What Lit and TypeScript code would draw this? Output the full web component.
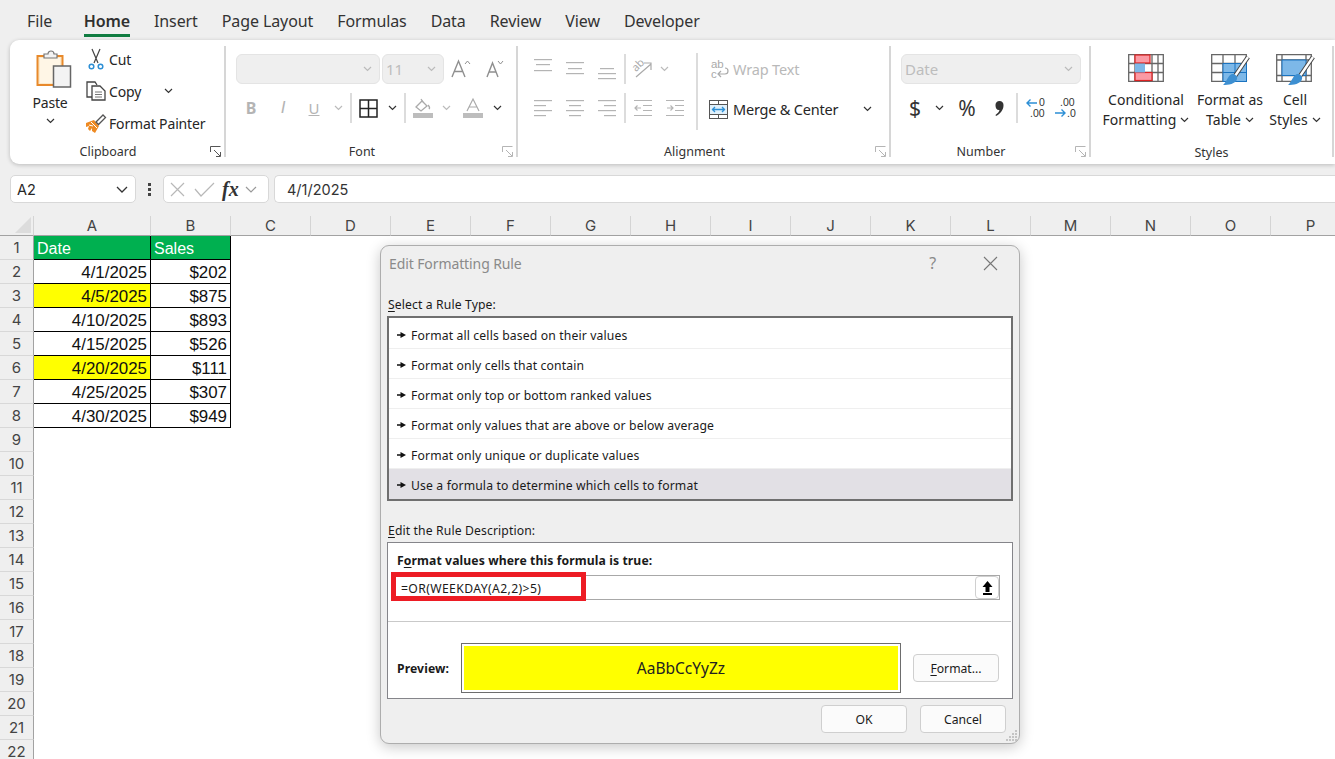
import { LitElement, html, css, svg } from "lit";
import { customElement } from "lit/decorators.js";

const chev = (c = "#333") => html`<svg class="chev" width="9" height="6" viewBox="0 0 9 6"><path d="M1 1l3.5 3.5L8 1" fill="none" stroke=${c} stroke-width="1.2"/></svg>`;
const launcher = (c: string) => html`<svg class="launch" width="11" height="11" viewBox="0 0 11 11"><path d="M.5 6V.5H10.5M4 4l6 6M6 10.5h4.5V6" fill="none" stroke=${c} stroke-width="1"/></svg>`;
const alignLines = (rows: number[][], c = "#b4b4b4") => html`<svg width="18" height="30" viewBox="0 0 18 30">${rows.map((r) => svg`<rect x=${r[0]} y=${r[2]} width=${r[1]} height="1.2" fill=${c}></rect>`)}</svg>`;
const brush = svg`<path d="M37 3 L24 22" stroke="#444" stroke-width="4.4"/><path d="M37 3 L24 22" stroke="#fff" stroke-width="2.4"/><path d="M21 20c3 0 6 2 5 5-1 5-9 6-14 6 3-2 5-10 9-11z" fill="#3d8fd1"/>`;

@customElement("app-root")
export class AppRoot extends LitElement {
  static styles = css`
    :host { display: block; width: 1335px; height: 759px; overflow: hidden; position: relative; background: #efefef; font-family: "Noto Sans", sans-serif; color: #262626; font-size: 14px; }
    svg { display: block; flex: none; overflow: visible; }
    .tabs { display: flex; height: 40px; padding-left: 27px; gap: 24px; font-size: 16px; letter-spacing: -0.1px; }
    .tab { height: 37px; line-height: 42px; color: #333; }
    .tab.file { margin-right: 7.5px; }
    .tab.on { font-weight: 600; border-bottom: 3px solid #107c41; height: 34px; line-height: 42px; color: #303030; letter-spacing: -0.1px; }
    .ribbon { display: flex; height: 124px; margin-left: 10px; background: #fff; border-radius: 9px 0 0 9px; box-shadow: 0 1px 4px rgba(0,0,0,.22); align-items: flex-start; }
    .group { position: relative; box-sizing: border-box; height: 111px; margin-top: 6px; border-right: 2px solid #d6d6d6; display: flex; flex-direction: column; flex: none; }
    .g-clip { width: 216px; padding: 4px 0 0 17px; }
    .g-font { width: 292px; padding: 8px 0 0 10px; }
    .g-align { width: 373px; padding: 8px 0 0 9px; }
    .g-num { width: 200px; padding: 8px 0 0 10px; }
    .g-styles { width: 243px; padding: 8px 0 0 10px; }
    .glabel { position: absolute; left: 0; right: 18px; bottom: -4px; height: 18px; line-height: 18px; text-align: center; font-size: 12.5px; color: #333; }
    .g-styles .glabel { right: 0; bottom: -5px; }
    .launch { position: absolute; right: 3px; bottom: 0; }
    .clip-body { display: flex; }
    .paste { width: 46px; display: flex; flex-direction: column; align-items: center; }
    .paste svg:first-child { margin-left: 7px; }
    .paste .pt { margin-top: 6px; line-height: 18px; font-size: 14px; letter-spacing: -.2px; }
    .paste .chev { margin-top: 6px; }
    .clip-cmds { margin: -7px 0 0 10px; display: flex; flex-direction: column; }
    .cmd { height: 32px; display: flex; align-items: center; font-size: 14px; letter-spacing: -.15px; }
    .cmd .ic { width: 26px; display: flex; justify-content: center; }
    .cmd .chev { margin-left: 23px; }
    .row { display: flex; align-items: center; height: 30px; }
    .row2 { margin-top: 9px; }
    .sel { box-sizing: border-box; height: 30px; background: #efefef; border: 1px solid #e4e4e4; border-radius: 6px; display: flex; align-items: center; justify-content: space-between; padding: 0 7px 0 3px; color: #bdbdbd; font-size: 15px; flex: none; }
    .w144 { width: 144px; margin-right: 2px; }
    .w62 { width: 62px; }
    .w180 { width: 180px; }
    .s { display: flex; align-items: center; justify-content: center; flex: none; height: 30px; }
    .w4 { width: 4px; } .w6 { width: 6px; } .w8 { width: 8px; } .w10 { width: 10px; } .w16 { width: 16px; } .w20 { width: 20px; }
    .w28 { width: 28px; } .w30 { width: 30px; } .w32 { width: 32px; } .w34 { width: 34px; } .w36 { width: 36px; } .w38 { width: 38px; }
    .vs { width: 2px; height: 30px; background: #dcdcdc; }
    .b { font-weight: 700; font-size: 16px; color: #b4b4b4; }
    .i { font-style: italic; font-size: 17px; color: #b4b4b4; font-family: "Liberation Sans", sans-serif; }
    .u { font-size: 15px; color: #b4b4b4; text-decoration: underline; }
    .align-body { display: flex; }
    .align-left { width: 169px; flex: none; }
    .align-right { border-left: 2px solid #dcdcdc; height: 77px; margin-top: -1px; padding-left: 13px; box-sizing: border-box; flex: 1; }
    .wrap { display: flex; align-items: center; height: 30px; margin-top: 1px; color: #b9b9b9; font-size: 14.5px; letter-spacing: -.15px; gap: 4px; }
    .merge { display: flex; align-items: center; height: 30px; margin-top: 10px; margin-left: -2px; font-size: 14.5px; letter-spacing: -.2px; gap: 5px; }
    .merge .chev { margin-left: 20px; }
    .num-sym { font-size: 21px; color: #333; line-height: 1; }
    .styles-body { display: flex; }
    .sc { display: flex; flex-direction: column; align-items: center; flex: none; font-size: 14px; letter-spacing: .05px; line-height: 20px; }
    .sc .top { height: 36px; }
    .sc .l { display: flex; align-items: center; gap: 4px; white-space: nowrap; }
    .w90 { width: 90px; } .w78 { width: 78px; } .w52 { width: 52px; }
    .fbar { display: flex; align-items: center; height: 28px; margin-top: 11px; padding-left: 10px; }
    .box { box-sizing: border-box; height: 28px; background: #fff; border: 1px solid #d8d8d8; border-radius: 5px; display: flex; align-items: center; flex: none; }
    .namebox { width: 126px; padding: 0 7px 0 6px; justify-content: space-between; font-family: "Inter", sans-serif; font-size: 14.5px; }
    .dots { width: 27px; display: flex; flex-direction: column; align-items: center; gap: 2px; }
    .dots i { display: block; width: 3px; height: 3px; background: #444; }
    .fbtns { width: 106px; padding-left: 6px; gap: 9px; }
    .fx { font: italic 700 20px "Liberation Serif", serif; color: #333; margin: 0 -3px 0 -2px; }
    .finput { margin-left: 5px; flex: 1; border-right: none; border-radius: 5px 0 0 5px; padding-left: 12px; font: 14.5px "Inter", sans-serif; color: #333; }
    .sheet { margin-top: 13px; display: grid; grid-template-columns: 34px 117px repeat(15, 80px); grid-auto-rows: 24px; grid-template-rows: 20px; font-family: "Inter", sans-serif; background: #fff; height: 543px; overflow: hidden; }
    .ch { background: #efefef; border-right: 1px solid #d4d4d4; border-bottom: 1px solid #a2a2a2; display: flex; align-items: center; justify-content: center; font-size: 15px; color: #444; box-sizing: border-box; }
    .corner { background: #efefef; border-bottom: 1px solid #a2a2a2; border-right: 1px solid #d4d4d4; display: flex; align-items: flex-end; justify-content: flex-end; padding: 0 2px 2px 0; box-sizing: border-box; }
    .rh { background: #efefef; border-right: 1px solid #a2a2a2; border-bottom: 1px solid #d8d8d8; display: flex; align-items: center; justify-content: center; font-size: 15px; color: #444; box-sizing: border-box; }
    .c { box-sizing: border-box; font: 16.9px/22px "Liberation Sans", sans-serif; padding: 2px 3px 0; text-align: right; color: #111; white-space: nowrap; }
    .t { border-right: 1px solid #000; border-bottom: 1px solid #000; }
    .c.hd { background: #00b050; color: #fff; text-align: left; font-size: 16px; }
    .y { background: #ffff00; }
    .dialog { position: absolute; left: 380px; top: 245px; width: 640px; height: 499px; box-sizing: border-box; background: #efefef; border: 1px solid #adadad; border-radius: 9px; box-shadow: 0 3px 14px rgba(0,0,0,.22); font-size: 12.2px; color: #1a1a1a; }
    .dtitle { height: 36px; display: flex; align-items: center; padding: 0 21px 2px 8px; box-sizing: border-box; font-size: 14px; color: #8a8a8a; letter-spacing: -.1px; }
    .dtitle .q { margin-left: auto; margin-right: 47px; font-size: 16px; color: #8a8a8a; }
    .dbody { padding: 0 6px; }
    .lab { line-height: 18px; padding-left: 1px; letter-spacing: .12px; }
    .lab1 { padding-top: 14px; margin-bottom: 2px; }
    .lab2 { padding-top: 21px; margin-bottom: 2px; }
    .list { box-sizing: border-box; height: 185px; border: 2px solid #6f6f6f; background: #fff; padding-top: 1px; }
    .item { box-sizing: border-box; height: 30px; display: flex; align-items: center; padding: 3px 0 0 8px; gap: 5px; border-bottom: 1px solid #efefef; letter-spacing: .14px; }
    .item.sel2 { background: #e2e0e5; border-bottom: none; padding-top: 2px; }
    .desc { box-sizing: border-box; height: 157px; border: 1px solid #85858a; background: #fff; }
    .dh { margin: 9px 0 0 9px; height: 17px; line-height: 18px; font-weight: 700; letter-spacing: .1px; }
    .input { position: relative; box-sizing: border-box; height: 25px; margin: 6px 12px 0 3px; border: 1px solid #a8a8a8; display: flex; align-items: center; justify-content: space-between; padding-left: 9px; background: #fff; letter-spacing: .38px; }
    .redbox { position: absolute; left: -1px; top: -4px; width: 195px; height: 29px; box-sizing: border-box; border: 5px solid #ed1c24; }
    .formula { position: relative; top: 1px; }
    .picker { box-sizing: border-box; width: 24px; height: 23px; background: #fff; border: 1px solid #d0d0d0; border-radius: 4px; display: flex; align-items: center; justify-content: center; }
    .hr { height: 1px; background: #c9c9c9; margin: 21px 1px 0 0; }
    .prow { display: flex; align-items: center; margin-top: 21px; padding-left: 9px; }
    .plabel { font-weight: 700; width: 64px; flex: none; letter-spacing: .1px; }
    .pbox { box-sizing: border-box; width: 440px; height: 50px; border: 1px solid #6d6d6d; padding: 2px; background: #fff; flex: none; }
    .pin { height: 100%; background: #ffff00; display: flex; align-items: center; justify-content: center; font-size: 15.5px; color: #222; }
    .btn { box-sizing: border-box; width: 86px; height: 28px; background: #fbfbfb; border: 1px solid #cfcfcf; border-radius: 4px; display: flex; align-items: center; justify-content: center; flex: none; }
    .btn.fmt { margin-left: 12px; }
    .dfoot { display: flex; justify-content: flex-end; gap: 13px; padding: 6px 13px 0 0; }
    .grip { position: absolute; right: 1px; bottom: 1px; }
    u { text-underline-offset: 2px; }
  `;

  render() {
    const cols = "ABCDEFGHIJKLMNOP".split("");
    const data: [string, string, boolean][] = [
      ["4/1/2025", "$202", false], ["4/5/2025", "$875", true], ["4/10/2025", "$893", false], ["4/15/2025", "$526", false],
      ["4/20/2025", "$111", true], ["4/25/2025", "$307", false], ["4/30/2025", "$949", false],
    ];
    const blanks = (n: number) => Array.from({ length: n }, () => html`<div></div>`);
    const items = ["Format all cells based on their values", "Format only cells that contain", "Format only top or bottom ranked values", "Format only values that are above or below average", "Format only unique or duplicate values", "Use a formula to determine which cells to format"];
    const arrow = html`<svg width="9" height="6" viewBox="0 0 9 6"><path d="M0 2.300h3.500V0L9 3 3.500 6V3.700H0z" fill="#111"/></svg>`;
    return html`
      <div class="tabs">
        <div class="tab file">File</div><div class="tab on">Home</div><div class="tab">Insert</div><div class="tab">Page Layout</div><div class="tab">Formulas</div><div class="tab">Data</div><div class="tab">Review</div><div class="tab">View</div><div class="tab">Developer</div>
      </div>
      <div class="ribbon">
        <div class="group g-clip">
          <div class="clip-body">
            <div class="paste">
              <svg width="36" height="38" viewBox="0 0 36 38"><rect x="1.500" y="6" width="25" height="29" fill="#fde9c9" stroke="#e8892b" stroke-width="2"/><rect x="4" y="8" width="20" height="25" fill="#fff6e6"/><path d="M8 7V4h4c0-4 6-4 6 0h3v4H8z" fill="#f3f3f3" stroke="#777" stroke-width="1.200"/><rect x="17.500" y="16" width="17" height="21" fill="#f3f3f3" stroke="#666" stroke-width="1.500"/></svg>
              <div class="pt">Paste</div>
              ${chev()}
            </div>
            <div class="clip-cmds">
              <div class="cmd"><span class="ic"><svg width="16" height="21" viewBox="0 0 16 21"><path d="M4 0l6 14M12 0L6 14" stroke="#444" stroke-width="1.200" fill="none"/><circle cx="3.500" cy="17.500" r="2.300" fill="none" stroke="#2d8fd5" stroke-width="1.500"/><circle cx="12.500" cy="17.500" r="2.300" fill="none" stroke="#2d8fd5" stroke-width="1.500"/></svg></span>Cut</div>
              <div class="cmd"><span class="ic"><svg width="20" height="20" viewBox="0 0 20 20"><path d="M6 16H1V1h8l2 3" fill="none" stroke="#444" stroke-width="1.300"/><path d="M6 5h8l5 5v9H6z" fill="#fff" stroke="#444" stroke-width="1.300"/><path d="M9 11h7M9 13.500h7M9 16h7" stroke="#777"/></svg></span>Copy ${chev()}</div>
              <div class="cmd"><span class="ic"><svg width="20" height="19" viewBox="0 0 20 19"><path d="M0 9l8-3 5 6-4 7-3-2 0-3-2 3-2-2 1-3-3 1z" fill="#ee8a22"/><path d="M5 8l6 6M3 11l4 1" stroke="#fff"/><path d="M10 8l7-7 2.500 2.500-7 7z" fill="#fff" stroke="#555" stroke-width="1.300"/></svg></span>Format Painter</div>
            </div>
          </div>
          <div class="glabel">Clipboard</div>
          ${launcher("#555")}
        </div>

        <div class="group g-font">
          <div class="row">
            <div class="sel w144"><span></span>${chev("#bbb")}</div>
            <div class="sel w62"><span>11</span>${chev("#bbb")}</div>
            <div class="s w34"><svg width="20" height="20" viewBox="0 0 20 20"><path d="M1 18L7.500 2 14 18M3.500 12.500h8" fill="none" stroke="#8f8f8f" stroke-width="1.400"/><path d="M14 5l2.500-3L19 5" fill="none" stroke="#8f8f8f"/></svg></div>
            <div class="s w34"><svg width="18" height="20" viewBox="0 0 18 20"><path d="M1 18L6.500 4 12 18M3 13h7" fill="none" stroke="#8f8f8f" stroke-width="1.400"/><path d="M12 2l2.500 3L17 2" fill="none" stroke="#8f8f8f"/></svg></div>
          </div>
          <div class="row row2">
            <div class="s w30 b">B</div><div class="s w34 i">I</div><div class="s w28 u">U</div><div class="s w20">${chev("#bbb")}</div>
            <div class="s w6"><div class="vs"></div></div>
            <div class="s w28"><svg width="19" height="19" viewBox="0 0 19 19"><path d="M1 1h17v17H1zM9.500 1v17M1 9.500h17" fill="none" stroke="#222" stroke-width="1.500"/></svg></div>
            <div class="s w20">${chev()}</div>
            <div class="s w6"><div class="vs"></div></div>
            <div class="s w30"><svg width="20" height="20" viewBox="0 0 20 20"><path d="M3 9l6-6 5 5-6 5z" fill="none" stroke="#aaa" stroke-width="1.300"/><path d="M8 1l2 3M15 7c2 2 2 3 1 4" fill="none" stroke="#aaa" stroke-width="1.300"/><rect y="15" width="20" height="5" fill="#bdbdbd"/></svg></div>
            <div class="s w16">${chev("#bbb")}</div>
            <div class="s w38"><svg width="20" height="20" viewBox="0 0 20 20"><path d="M4 13L10 1l6 12M6 9h8" fill="none" stroke="#aaa" stroke-width="1.200"/><rect y="15" width="20" height="5" fill="#bdbdbd"/></svg></div>
            <div class="s w10">${chev()}</div>
          </div>
          <div class="glabel">Font</div>
          ${launcher("#b5b5b5")}
        </div>

        <div class="group g-align">
          <div class="align-body">
            <div class="align-left">
              <div class="row">
                <div class="s w32">${alignLines([[0, 18, 5], [2, 14, 10], [0, 18, 16]])}</div>
                <div class="s w32">${alignLines([[0, 18, 8], [2, 14, 14], [0, 18, 19]])}</div>
                <div class="s w32">${alignLines([[2, 14, 14], [0, 18, 19], [0, 18, 24]])}</div>
                <div class="s w4"><div class="vs"></div></div>
                <div class="s w32"><svg width="22" height="22" viewBox="0 0 22 22"><text x="0" y="11" transform="rotate(-45 6 8)" font-family="Noto Sans" font-size="11" fill="#aaa">ab</text><path d="M4 19L19 6M12 5h7v7" fill="none" stroke="#aaa" stroke-width="1.200"/></svg></div>
                <div class="s w10">${chev("#bbb")}</div>
              </div>
              <div class="row row2">
                <div class="s w32">${alignLines([[0, 18, 7], [0, 12, 12], [0, 18, 17], [0, 12, 22]])}</div>
                <div class="s w32">${alignLines([[0, 18, 7], [3, 12, 12], [0, 18, 17], [3, 12, 22]])}</div>
                <div class="s w32">${alignLines([[0, 18, 7], [6, 12, 12], [0, 18, 17], [6, 12, 22]])}</div>
                <div class="s w4"><div class="vs"></div></div>
                <div class="s w32"><svg width="18" height="30" viewBox="0 0 18 30"><path d="M0 7.500h18M9 12.500h9M9 17.500h9M0 22.500h18" stroke="#b4b4b4" stroke-width="1.200"/><path d="M7 15H1M3.500 12.500L1 15l2.500 2.500" fill="none" stroke="#b4b4b4" stroke-width="1.200"/></svg></div>
                <div class="s w32"><svg width="18" height="30" viewBox="0 0 18 30"><path d="M0 7.500h18M9 12.500h9M9 17.500h9M0 22.500h18" stroke="#b4b4b4" stroke-width="1.200"/><path d="M1 15h6M4.500 12.500L7 15l-2.500 2.500" fill="none" stroke="#b4b4b4" stroke-width="1.200"/></svg></div>
              </div>
            </div>
            <div class="align-right">
              <div class="wrap"><svg width="18" height="22" viewBox="0 0 18 22"><text x="0" y="10" font-family="Liberation Sans" font-size="11.500" fill="#aaa">ab</text><text x="0" y="20" font-family="Liberation Sans" font-size="11.500" fill="#aaa">c</text><path d="M8 16h6c4 0 4-6 0-6M10 13l-3 3 3 3" fill="none" stroke="#aaa" stroke-width="1.200"/></svg>Wrap Text</div>
              <div class="merge"><svg width="19" height="19" viewBox="0 0 19 19"><rect x=".5" y=".5" width="18" height="18" fill="#fff" stroke="#555"/><path d="M1 4.500h17M1 14.500h17M9.500 1v3M9.500 15v3" stroke="#555"/><rect x="1" y="5" width="17" height="9" fill="#dff0fb"/><path d="M3 9.500h13M6 7L3.500 9.500 6 12M13 7l2.500 2.500L13 12" fill="none" stroke="#2d8fd5" stroke-width="1.300"/></svg>Merge &amp; Center ${chev()}</div>
            </div>
          </div>
          <div class="glabel">Alignment</div>
          ${launcher("#b5b5b5")}
        </div>

        <div class="group g-num">
          <div class="row"><div class="sel w180"><span>Date</span>${chev("#bbb")}</div></div>
          <div class="row row2">
            <div class="s w28 num-sym">$</div><div class="s w20">${chev()}</div>
            <div class="s w36 num-sym">%</div>
            <div class="s w28"><svg width="9" height="15" viewBox="0 0 9 15"><path d="M4.500 0a4 4 0 0 1 4 4.500C8.500 9 5 13 1 15l-.5-1C2.500 12.500 4 11 4.500 9 2 9.500 .5 7 .5 4.500A4 4 0 0 1 4.500 0z" fill="#333"/></svg></div>
            <div class="s w8"><div class="vs"></div></div>
            <div class="s w28"><svg width="21" height="22" viewBox="0 0 21 22"><path d="M12 6H2M5.500 2.500L2 6l3.500 3.500" fill="none" stroke="#2d8fd5" stroke-width="1.400"/><text x="14" y="9" font-family="Liberation Sans" font-size="10.500" fill="#333">0</text><text x="5" y="20" font-family="Liberation Sans" font-size="10.500" fill="#333">.00</text></svg></div>
            <div class="s w32"><svg width="21" height="22" viewBox="0 0 21 22"><text x="5" y="9" font-family="Liberation Sans" font-size="10.500" fill="#333">.00</text><path d="M0 16h10M6.500 12.500L10 16l-3.500 3.500" fill="none" stroke="#2d8fd5" stroke-width="1.400"/><text x="12" y="20" font-family="Liberation Sans" font-size="10.500" fill="#333">.0</text></svg></div>
          </div>
          <div class="glabel">Number</div>
          ${launcher("#b5b5b5")}
        </div>

        <div class="group g-styles">
          <div class="styles-body">
            <div class="sc w90">
              <div class="top"><svg width="36" height="28" viewBox="0 0 36 28"><path d="M.7.700h34.600v26.600H.7zM.7 9.500h34.600M.7 18.500h34.600M7 1v26M24 1v26M30 1v26" fill="none" stroke="#666" stroke-width="1.300"/><rect x="7" y="1" width="15" height="8" fill="#fb9aa4" stroke="#d22" stroke-width="1.200"/><rect x="7" y="18.500" width="17" height="8" fill="#fb9aa4" stroke="#d22" stroke-width="1.200"/><rect x="7" y="9.500" width="10" height="9" fill="#7db8e8"/></svg></div>
              <div class="l">Conditional</div><div class="l">Formatting ${chev()}</div>
            </div>
            <div class="sc w78">
              <div class="top"><svg width="38" height="34" viewBox="0 0 38 34"><path d="M.7.700h34.600v26.600H.7zM.7 9.500h34.600M.7 18.500h34.600M12 1v26M24 1v26" fill="none" stroke="#666" stroke-width="1.300"/><rect x="12" y="9.500" width="23.500" height="18" fill="#7db8e8" stroke="#1a73c0" stroke-width="1"/><path d="M24 9.500v18M12 18.500h23" stroke="#1a73c0"/>${brush}</svg></div>
              <div class="l">Format as</div><div class="l">Table ${chev()}</div>
            </div>
            <div class="sc w52">
              <div class="top"><svg width="38" height="34" viewBox="0 0 38 34"><path d="M.7.700h34.600v26.600H.7zM.7 6h34.600M.7 21.500h34.600M6 1v26M30 1v26" fill="none" stroke="#666" stroke-width="1.300"/><rect x="6" y="6" width="24" height="15.500" fill="#7db8e8" stroke="#1a73c0" stroke-width="1"/>${brush}</svg></div>
              <div class="l">Cell</div><div class="l">Styles ${chev()}</div>
            </div>
          </div>
          <div class="glabel">Styles</div>
        </div>
      </div>

      <div class="fbar">
        <div class="box namebox"><span>A2</span><svg width="12" height="7" viewBox="0 0 12 7"><path d="M1 1l5 5 5-5" fill="none" stroke="#333" stroke-width="1.300"/></svg></div>
        <div class="dots"><i></i><i></i><i></i></div>
        <div class="box fbtns">
          <svg width="15" height="15" viewBox="0 0 15 15"><path d="M1 1l13 13M14 1L1 14" stroke="#b8b8b8" stroke-width="1.200"/></svg>
          <svg width="21" height="15" viewBox="0 0 21 15"><path d="M1 7l6 7L20 1" fill="none" stroke="#b8b8b8" stroke-width="1.200"/></svg>
          <span class="fx">fx</span>
          <svg width="12" height="7" viewBox="0 0 12 7"><path d="M1 1l5 5 5-5" fill="none" stroke="#999" stroke-width="1.200"/></svg>
        </div>
        <div class="box finput">4/1/2025</div>
      </div>

      <div class="sheet">
        <div class="corner"><svg width="16" height="16" viewBox="0 0 16 16"><path d="M16 0v16H0z" fill="#dcdcdc"/></svg></div>
        ${cols.map((c) => html`<div class="ch">${c}</div>`)}
        <div class="rh">1</div><div class="c t hd">Date</div><div class="c t hd">Sales</div>${blanks(14)}
        ${data.map((d, i) => html`<div class="rh">${i + 2}</div><div class="c t ${d[2] ? "y" : ""}">${d[0]}</div><div class="c t">${d[1]}</div>${blanks(14)}`)}
        ${Array.from({ length: 14 }, (_, i) => html`<div class="rh">${i + 9}</div>${blanks(16)}`)}
      </div>

      <div class="dialog">
        <div class="dtitle"><span>Edit Formatting Rule</span><span class="q">?</span><svg width="15" height="15" viewBox="0 0 15 15"><path d="M1 1l13 13M14 1L1 14" stroke="#777" stroke-width="1.100"/></svg></div>
        <div class="dbody">
          <div class="lab lab1"><u>S</u>elect a Rule Type:</div>
          <div class="list">
            ${items.map((t, i) => html`<div class="item ${i === 5 ? "sel2" : ""}">${arrow}<span>${t}</span></div>`)}
          </div>
          <div class="lab lab2"><u>E</u>dit the Rule Description:</div>
          <div class="desc">
            <div class="dh">F<u>o</u>rmat values where this formula is true:</div>
            <div class="input">
              <div class="redbox"></div>
              <span class="formula">=OR(WEEKDAY(A2,2)&gt;5)</span>
              <div class="picker"><svg width="11" height="14" viewBox="0 0 11 14"><path d="M5.500 0L10.500 6H7.500v5h-4V6H.5zM1 12h9v2H1z" fill="#000"/></svg></div>
            </div>
            <div class="hr"></div>
            <div class="prow">
              <div class="plabel">Preview:</div>
              <div class="pbox"><div class="pin">AaBbCcYyZz</div></div>
              <div class="btn fmt"><span><u>F</u>ormat...</span></div>
            </div>
          </div>
        </div>
        <div class="dfoot"><div class="btn">OK</div><div class="btn">Cancel</div></div>
        <svg class="grip" width="13" height="13" viewBox="0 0 13 13"><path d="M10 1h2v2h-2zM7 4h2v2H7zM10 4h2v2h-2zM4 7h2v2H4zM7 7h2v2H7zM10 7h2v2h-2zM1 10h2v2H1zM4 10h2v2H4zM7 10h2v2H7zM10 10h2v2h-2z" fill="#c4c4c4"/></svg>
      </div>
    `;
  }
}
